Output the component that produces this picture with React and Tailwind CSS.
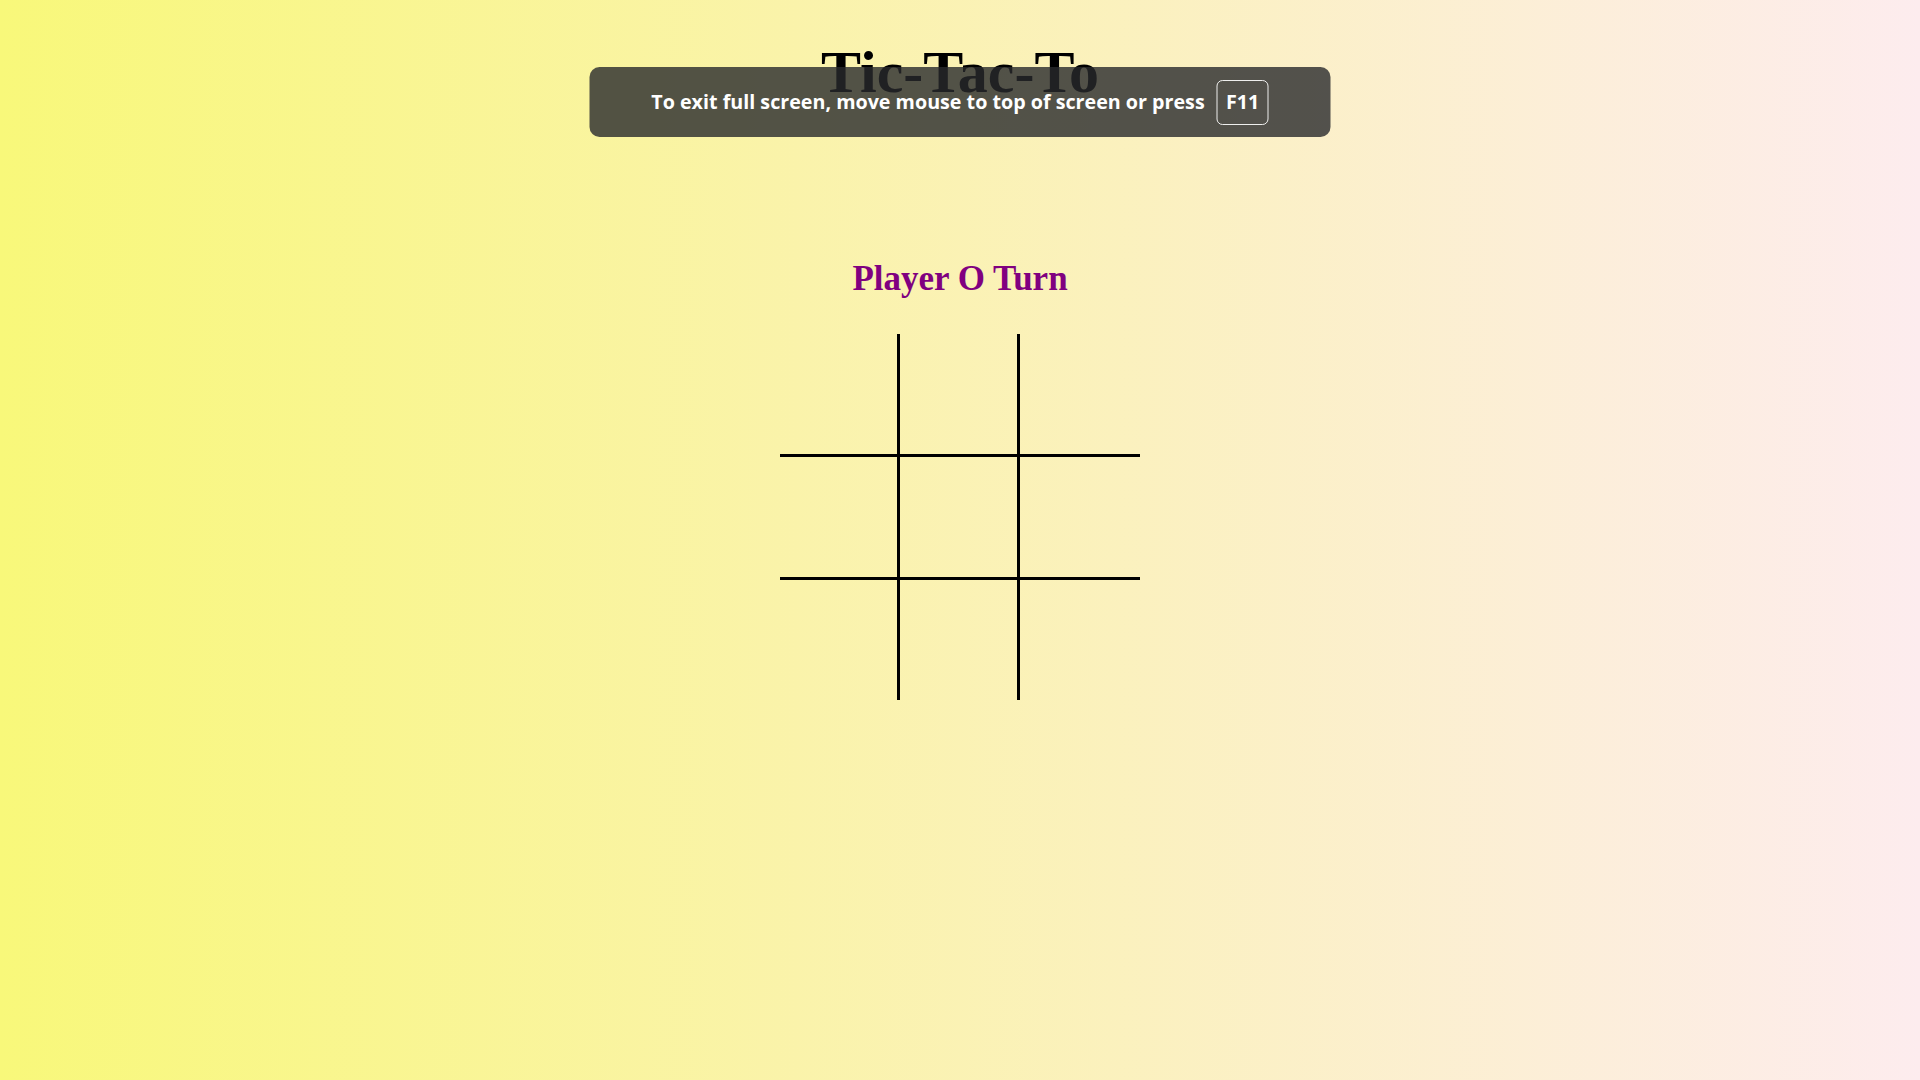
export default function App() {
  const cells = Array.from({ length: 9 }, (_, i) => i)
  const rowH = ['h-[123px]', 'h-[123px]', 'h-[120px]']

  return (
    <div className="relative min-h-screen w-full bg-[linear-gradient(to_right,#f8f87a,#fdecee)] flex flex-col items-center pt-[42px]" style={{ fontFamily: '"Liberation Serif", "Times New Roman", serif' }}>
      <h1 className="text-[60px] leading-none font-bold text-black">Tic-Tac-To</h1>
      <h2 className="mt-[159px] text-[35px] leading-none font-bold text-[#800080]">Player O Turn</h2>

      {/* board */}
      <div className="mt-[38px] grid grid-cols-3 w-[360px]">
        {cells.map(i => (
          <div
            key={i}
            className={
              rowH[Math.floor(i / 3)] + ' border-black ' +
              (i % 3 !== 2 ? 'border-r-[3px] ' : '') +
              (i < 6 ? 'border-b-[3px]' : '')
            }
          />
        ))}
      </div>

      {/* fullscreen notice */}
      <div className="absolute left-1/2 -translate-x-1/2 top-[67px] w-[741px] h-[70px] rounded-[10px] bg-[rgba(40,41,44,0.8)] flex items-center justify-center gap-[12px] text-white font-bold text-[19.7px]" style={{ fontFamily: '"Open Sans", "Noto Sans", sans-serif' }}>
        <span>To exit full screen, move mouse to top of screen or press</span>
        <span className="w-[52px] h-[45px] rounded-[6px] border-[1.5px] border-white/90 flex items-center justify-center">F11</span>
      </div>
    </div>
  )
}
